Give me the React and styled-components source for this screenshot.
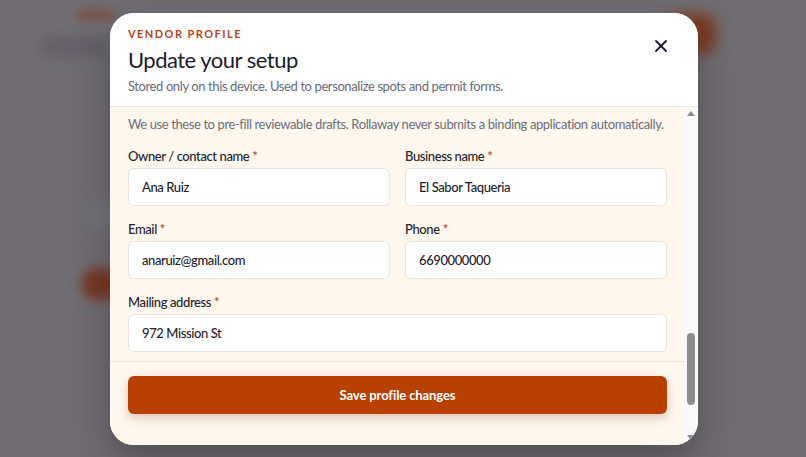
import React, { useLayoutEffect, useRef, useState } from "react";
import styled, { createGlobalStyle } from "styled-components";
import { X } from "lucide-react";

const GlobalStyle = createGlobalStyle`
  * { box-sizing: border-box; }
  html, body { margin: 0; padding: 0; }
  body { font-family: "Lato", "Open Sans", sans-serif; letter-spacing: -0.4px; }
`;

const Page = styled.div`
  position: relative;
  width: 806px;
  height: 457px;
  overflow: hidden;
  background: #716f74;
`;

const Blob = styled.div`
  position: absolute;
  left: ${(p) => p.$x}px;
  top: ${(p) => p.$y}px;
  width: ${(p) => p.$w}px;
  height: ${(p) => p.$h}px;
  border-radius: ${(p) => p.$r || 8}px;
  background: ${(p) => p.$c};
  filter: blur(${(p) => p.$blur || 6}px);
`;

const Overlay = styled.div`
  position: absolute;
  inset: 0;
  display: flex;
  align-items: center;
  justify-content: center;
`;

const Modal = styled.div`
  width: 588px;
  height: 432px;
  margin-left: 2px;
  border-radius: 24px;
  overflow: hidden;
  display: flex;
  flex-direction: column;
  background: #fdf7ee;
  box-shadow: 0 18px 40px rgba(20, 16, 24, 0.35);
`;

const Header = styled.header`
  display: flex;
  justify-content: space-between;
  align-items: flex-start;
  padding: 13px 21px 11px 18px;
  background: #ffffff;
  border-bottom: 1px solid #ece6dd;
`;

const HeadText = styled.div`
  display: flex;
  flex-direction: column;
`;

const Eyebrow = styled.div`
  font-size: 11px;
  line-height: 16px;
  font-weight: 700;
  letter-spacing: 1.45px;
  color: #b3461c;
  text-transform: uppercase;
`;

const Title = styled.h2`
  margin: 4px 0 0;
  font-size: 22px;
  line-height: 28px;
  font-weight: 400;
  letter-spacing: -0.5px;
  color: #1c1b2b;
`;

const Subtitle = styled.p`
  margin: 3px 0 0;
  font-size: 13px;
  line-height: 18px;
  color: #6b6a78;
`;

const CloseButton = styled.button`
  align-self: flex-start;
  margin: 4px 0 0;
  width: 32px;
  height: 32px;
  display: flex;
  align-items: center;
  justify-content: center;
  border: none;
  background: transparent;
  color: #1c1b2b;
  padding: 0;
  cursor: pointer;
`;

const Body = styled.div`
  flex: 1;
  min-height: 0;
  display: flex;
`;

const Scroll = styled.div`
  position: relative;
  flex: 1;
  overflow-y: scroll;
  background: #fdf7ee;
  scrollbar-width: none;
  &::-webkit-scrollbar {
    display: none;
  }
`;

const Rail = styled.div`
  width: 14px;
  display: flex;
  flex-direction: column;
  background: #f9f9f9;
`;

const Arrow = styled.div`
  height: 14px;
  display: flex;
  align-items: center;
  justify-content: center;
  &::before {
    content: "";
    width: 0;
    height: 0;
    border-left: 4px solid transparent;
    border-right: 4px solid transparent;
    ${(p) =>
      p.$down
        ? "border-top: 5px solid #8d8d8d;"
        : "border-bottom: 5px solid #8d8d8d;"}
  }
`;

const Track = styled.div`
  position: relative;
  flex: 1;
`;

const Thumb = styled.div`
  position: absolute;
  left: 3px;
  width: 8px;
  border-radius: 4px;
  background: #8d8d8d;
`;

const Content = styled.div`
  padding: 16px 17px 0 18px;
`;

const Section = styled.section`
  margin-bottom: 24px;
`;

const SectionTitle = styled.h3`
  margin: 0 0 6px;
  font-size: 15px;
  line-height: 22px;
  font-weight: 700;
  color: #1c1b2b;
`;

const Intro = styled.p`
  margin: 0 0 14px;
  font-size: 13px;
  line-height: 18px;
  color: #6e6d7a;
`;

const Hint = styled.p`
  margin: 12px 0 0;
  font-size: 12px;
  line-height: 18px;
  color: #6e6d7a;
`;

const Grid = styled.div`
  display: grid;
  grid-template-columns: 1fr 1fr;
  column-gap: 15px;
  row-gap: 14px;
`;

const Field = styled.label`
  display: flex;
  flex-direction: column;
  gap: 3px;
  grid-column: ${(p) => (p.$wide ? "1 / -1" : "auto")};
`;

const Label = styled.span`
  font-size: 13px;
  line-height: 18px;
  font-weight: 500;
  color: #25242f;
`;

const Req = styled.span`
  color: #c0392b;
  margin-left: 3px;
`;

const Input = styled.input`
  height: 38px;
  padding: 0 13px;
  border: 1px solid #e9e3da;
  border-radius: 6px;
  background: #ffffff;
  font-family: inherit;
  letter-spacing: -0.4px;
  font-size: 13px;
  font-weight: 500;
  color: #1f1e2a;
  outline: none;
`;

const Footer = styled.div`
  position: sticky;
  bottom: 0;
  margin: 0 -17px 0 -18px;
  padding: 14px 17px 31px 18px;
  background: #fdf7ee;
  border-top: 1px solid #ece5da;
`;

const SaveButton = styled.button`
  width: 100%;
  height: 38px;
  border: none;
  border-radius: 6px;
  background: #b84100;
  color: #ffffff;
  font-family: inherit;
  letter-spacing: -0.1px;
  font-size: 13px;
  font-weight: 700;
  box-shadow: 0 4px 10px rgba(120, 60, 20, 0.25);
  cursor: pointer;
`;

const hidden = [
  {
    title: "Truck basics",
    fields: [
      ["Truck name", "El Sabor"],
      ["Cuisine", "Mexican"],
      ["Length (ft)", "22"],
      ["Plate number", "8ABC123"],
      ["Commissary", "Mission Kitchen"],
      ["Generator", "Propane"],
      ["Seating", "None"],
      ["Staff on shift", "3"],
    ],
  },
  {
    title: "Operating preferences",
    fields: [
      ["Preferred days", "Tue – Sat"],
      ["Start time", "11:00 AM"],
      ["End time", "8:00 PM"],
      ["Max distance", "10 mi"],
      ["Neighborhoods", "Mission, SoMa"],
      ["Events", "Yes"],
      ["Private catering", "Yes"],
      ["Night markets", "No"],
    ],
  },
  {
    title: "Permits on file",
    fields: [
      ["Health permit #", "HP-20417"],
      ["Expires", "03/2026"],
      ["Fire inspection", "Passed"],
      ["Seller's permit", "SR-55190"],
      ["Insurance carrier", "Next"],
      ["Policy #", "NX-88213"],
      ["Business license", "BL-10294"],
      ["License expires", "12/2025"],
    ],
  },
];

function Required() {
  return <Req>*</Req>;
}

export default function App() {
  const scrollRef = useRef(null);
  const anchorRef = useRef(null);
  const trackRef = useRef(null);
  const [thumb, setThumb] = useState({ top: 0, height: 0 });

  useLayoutEffect(() => {
    const el = scrollRef.current;
    if (!el || !anchorRef.current || !trackRef.current) return;
    el.scrollTop = anchorRef.current.offsetTop - 8;
    const update = () => {
      const trackH = trackRef.current.clientHeight;
      setThumb({
        top: (el.scrollTop / el.scrollHeight) * trackH,
        height: (el.clientHeight / el.scrollHeight) * trackH,
      });
    };
    update();
    el.addEventListener("scroll", update);
    return () => el.removeEventListener("scroll", update);
  }, []);

  return (
    <>
      <GlobalStyle />
      <Page>
        <Blob $x={40} $y={36} $w={70} $h={22} $c="#646268" />
        <Blob $x={75} $y={10} $w={40} $h={10} $c="#7a5148" $blur={5} />
        <Blob $x={668} $y={14} $w={48} $h={40} $r={12} $c="#7c3a22" $blur={7} />
        <Blob $x={82} $y={268} $w={36} $h={32} $r={14} $c="#7a3824" $blur={6} />
        <Blob $x={92} $y={200} $w={30} $h={30} $c="#77787f" $blur={8} />
        <Overlay>
          <Modal role="dialog" aria-label="Vendor profile">
            <Header>
              <HeadText>
                <Eyebrow>Vendor profile</Eyebrow>
                <Title>Update your setup</Title>
                <Subtitle>
                  Stored only on this device. Used to personalize spots and permit forms.
                </Subtitle>
              </HeadText>
              <CloseButton aria-label="Close">
                <X size={20} strokeWidth={2.2} />
              </CloseButton>
            </Header>
            <Body>
              <Scroll ref={scrollRef}>
                <Content>
                  {hidden.map((s) => (
                    <Section key={s.title}>
                      <SectionTitle>{s.title}</SectionTitle>
                      <Grid>
                        {s.fields.map(([l, v]) => (
                          <Field key={l}>
                            <Label>{l}</Label>
                            <Input defaultValue={v} />
                          </Field>
                        ))}
                      </Grid>
                    </Section>
                  ))}
                  <Section>
                    <Intro ref={anchorRef}>
                      We use these to pre-fill reviewable drafts. Rollaway never submits a binding application automatically.
                    </Intro>
                    <Grid>
                      <Field>
                        <Label>Owner / contact name<Required /></Label>
                        <Input defaultValue="Ana Ruiz" />
                      </Field>
                      <Field>
                        <Label>Business name<Required /></Label>
                        <Input defaultValue="El Sabor Taqueria" />
                      </Field>
                      <Field>
                        <Label>Email<Required /></Label>
                        <Input defaultValue="anaruiz@gmail.com" />
                      </Field>
                      <Field>
                        <Label>Phone<Required /></Label>
                        <Input defaultValue="6690000000" />
                      </Field>
                      <Field $wide>
                        <Label>Mailing address<Required /></Label>
                        <Input defaultValue="972 Mission St" />
                      </Field>
                      <Field>
                        <Label>City</Label>
                        <Input defaultValue="San Francisco" />
                      </Field>
                      <Field>
                        <Label>ZIP code</Label>
                        <Input defaultValue="94103" />
                      </Field>
                    </Grid>
                    <Hint>Fields marked * are required for permit drafts.</Hint>
                  </Section>
                  <Footer>
                    <SaveButton type="button">Save profile changes</SaveButton>
                  </Footer>
                </Content>
              </Scroll>
              <Rail aria-hidden="true">
                <Arrow />
                <Track ref={trackRef}>
                  <Thumb style={{ top: thumb.top, height: thumb.height }} />
                </Track>
                <Arrow $down />
              </Rail>
            </Body>
          </Modal>
        </Overlay>
      </Page>
    </>
  );
}
